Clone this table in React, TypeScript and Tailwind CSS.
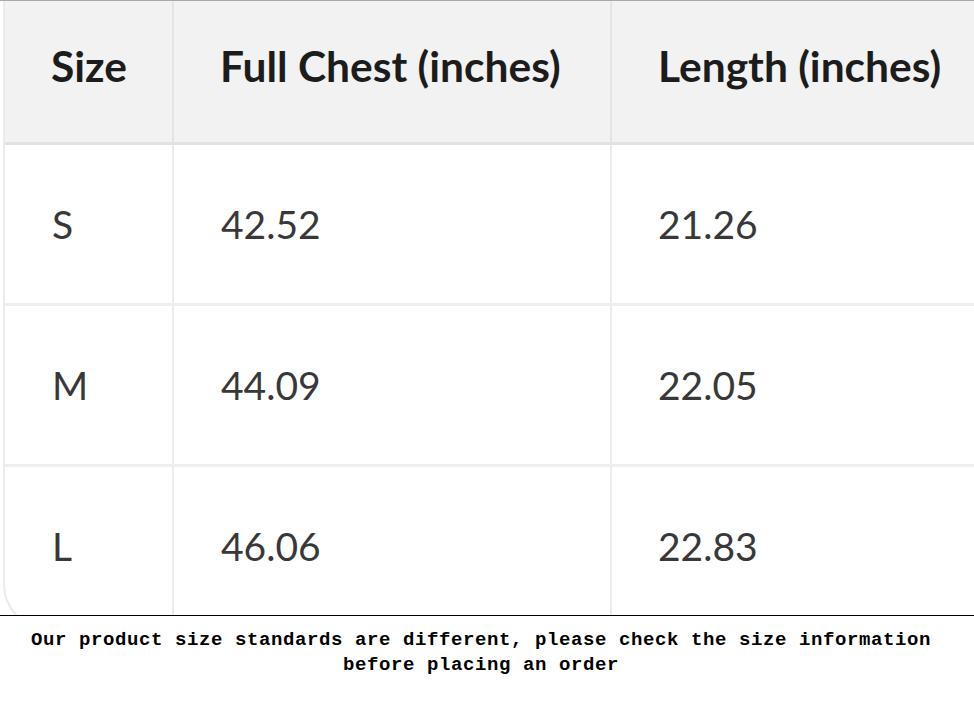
import React from "react";

const rows = [
  ["S", "42.52", "21.26"],
  ["M", "44.09", "22.05"],
  ["L", "46.06", "22.83"],
];

const App: React.FC = () => {
  return (
    <div className="w-[974px] h-[706px] bg-white overflow-hidden">
      {/* size table, clipped at the bottom */}
      <div className="h-[615px] overflow-hidden border-t border-[#a9a9a9]">
        <div className="ml-[3px] h-[628px] border-l-2 border-b-2 border-[#ebebeb] rounded-bl-[44px] overflow-hidden font-['Lato',sans-serif]">
          <div className="grid grid-cols-[169px_438px_1fr] bg-[#f2f2f2] border-b-[3px] border-[#e2e2e2] h-[144px]">
            <div className="flex items-center pl-[46px] border-r-2 border-[#e4e4e4] text-[42.5px] font-bold text-[#1c1c1c] pb-[12px]">
              Size
            </div>
            <div className="flex items-center pl-[46px] border-r-2 border-[#e4e4e4] text-[42.5px] font-bold text-[#1c1c1c] pb-[12px]">
              Full Chest (inches)
            </div>
            <div className="flex items-center pl-[46px] text-[42.5px] font-bold text-[#1c1c1c] pb-[12px]">
              Length (inches)
            </div>
          </div>
          {rows.map((r) => (
            <div
              key={r[0]}
              className="grid grid-cols-[169px_438px_1fr] h-[161px] border-b-[3px] border-[#eeeeee]"
            >
              <div className="flex items-center pl-[47px] border-r-2 border-[#ebebeb] text-[39px] text-[#383838]">
                {r[0]}
              </div>
              <div className="flex items-center pl-[47px] border-r-2 border-[#ebebeb] text-[39px] text-[#383838]">
                {r[1]}
              </div>
              <div className="flex items-center pl-[46px] text-[39px] text-[#383838]">
                {r[2]}
              </div>
            </div>
          ))}
        </div>
      </div>

      {/* note */}
      <div className="border-t border-black pt-[12px] pr-[12px] text-center font-['Liberation_Mono',monospace] font-bold text-[19px] tracking-[0.6px] leading-[25px] text-black">
        Our product size standards are different, please check the size information
        <br />
        before placing an order
      </div>
    </div>
  );
};

export default App;
